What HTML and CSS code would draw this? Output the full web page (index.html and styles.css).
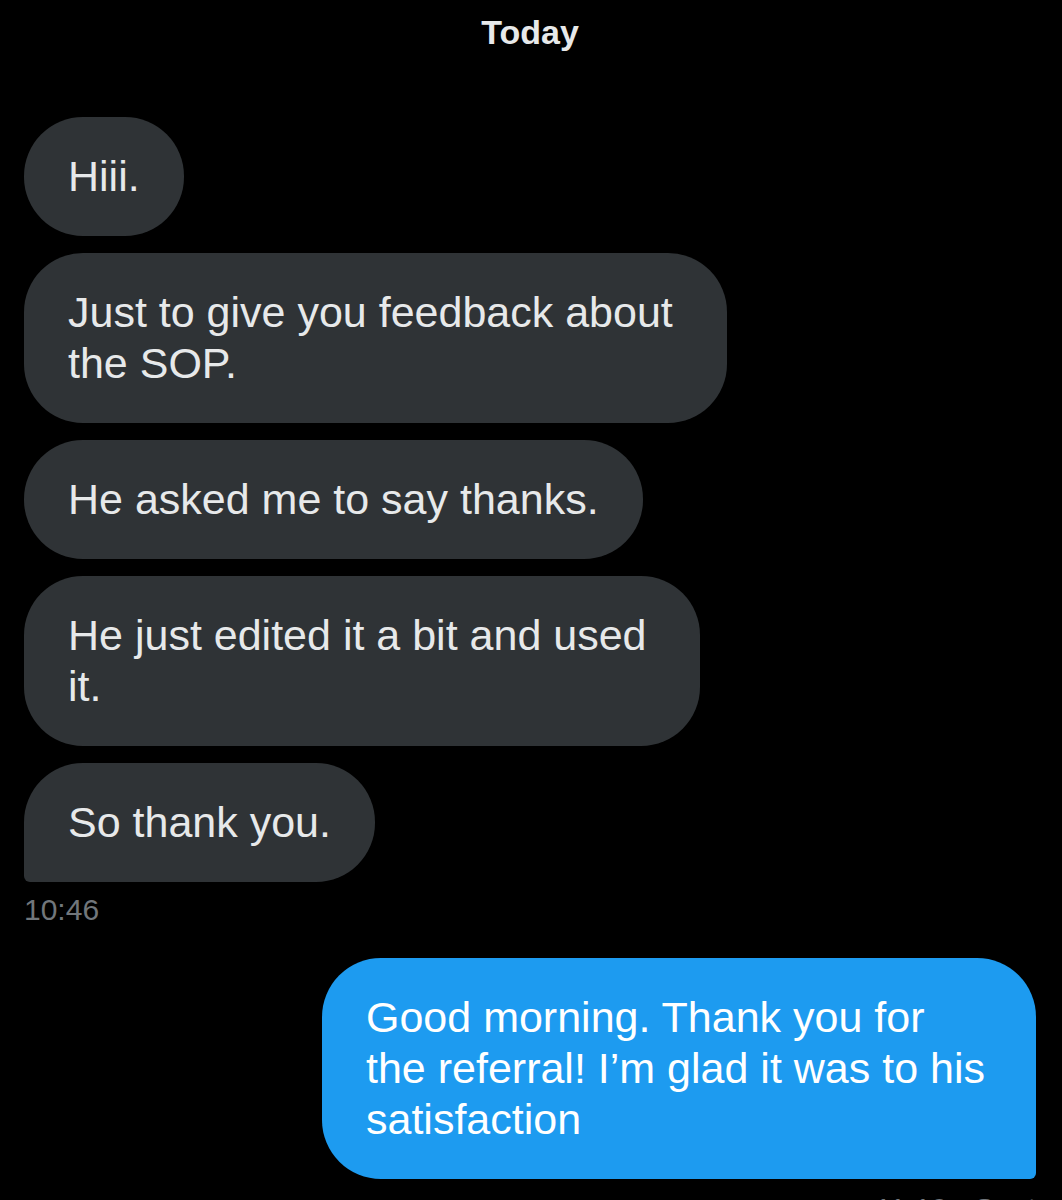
FILE: index.html
```html
<!DOCTYPE html>
<html lang="en">
<head>
<meta charset="utf-8">
<title>Messages</title>
<link rel="stylesheet" href="styles.css">
</head>
<body>
<main class="chat">
  <div class="day">Today</div>
  <section class="group group-in">
    <div class="bubble in">Hiii.</div>
    <div class="bubble in wide">Just to give you feedback about<br>the SOP.</div>
    <div class="bubble in">He asked me to say thanks.</div>
    <div class="bubble in wide">He just edited it a bit and used<br>it.</div>
    <div class="bubble in last">So thank you.</div>
    <div class="meta">10:46</div>
  </section>
  <section class="group group-out">
    <div class="bubble out last">Good morning. Thank you for<br>the referral! I’m glad it was to his<br>satisfaction</div>
    <div class="meta meta-out">11:19 · Sent</div>
  </section>
</main>
</body>
</html>
```
FILE: styles.css
```css
html, body {
  margin: 0;
  padding: 0;
  background: #000;
}
body {
  font-family: "Liberation Sans", Arial, sans-serif;
  color: #e7e9ea;
  height: 1200px;
  overflow: hidden;
}
.chat {
  display: flex;
  flex-direction: column;
  padding: 0 26px 0 24px;
}
.day {
  text-align: center;
  font-weight: 700;
  font-size: 34px;
  line-height: 40px;
  margin-top: 12px;
  color: #e7e9ea;
}
.group {
  display: flex;
  flex-direction: column;
  gap: 17px;
}
.group-in {
  align-items: flex-start;
  margin-top: 65px;
}
.group-out {
  align-items: flex-end;
  margin-top: 32px;
}
.bubble {
  font-size: 43px;
  line-height: 51px;
  padding: 34px 44px;
  border-radius: 59px;
  white-space: nowrap;
}
.bubble.wide {
  padding-right: 54px;
}
.bubble.in {
  background: #2f3336;
  color: #e7e9ea;
}
.bubble.in.last {
  border-bottom-left-radius: 6px;
}
.bubble.out {
  background: #1d9bf0;
  color: #ffffff;
  width: 626px;
}
.bubble.out.last {
  border-bottom-right-radius: 6px;
}
.meta {
  font-size: 30px;
  line-height: 32px;
  color: #71767b;
  margin-top: -5px;
}
.meta-out {
  margin-top: -3px;
}
```
